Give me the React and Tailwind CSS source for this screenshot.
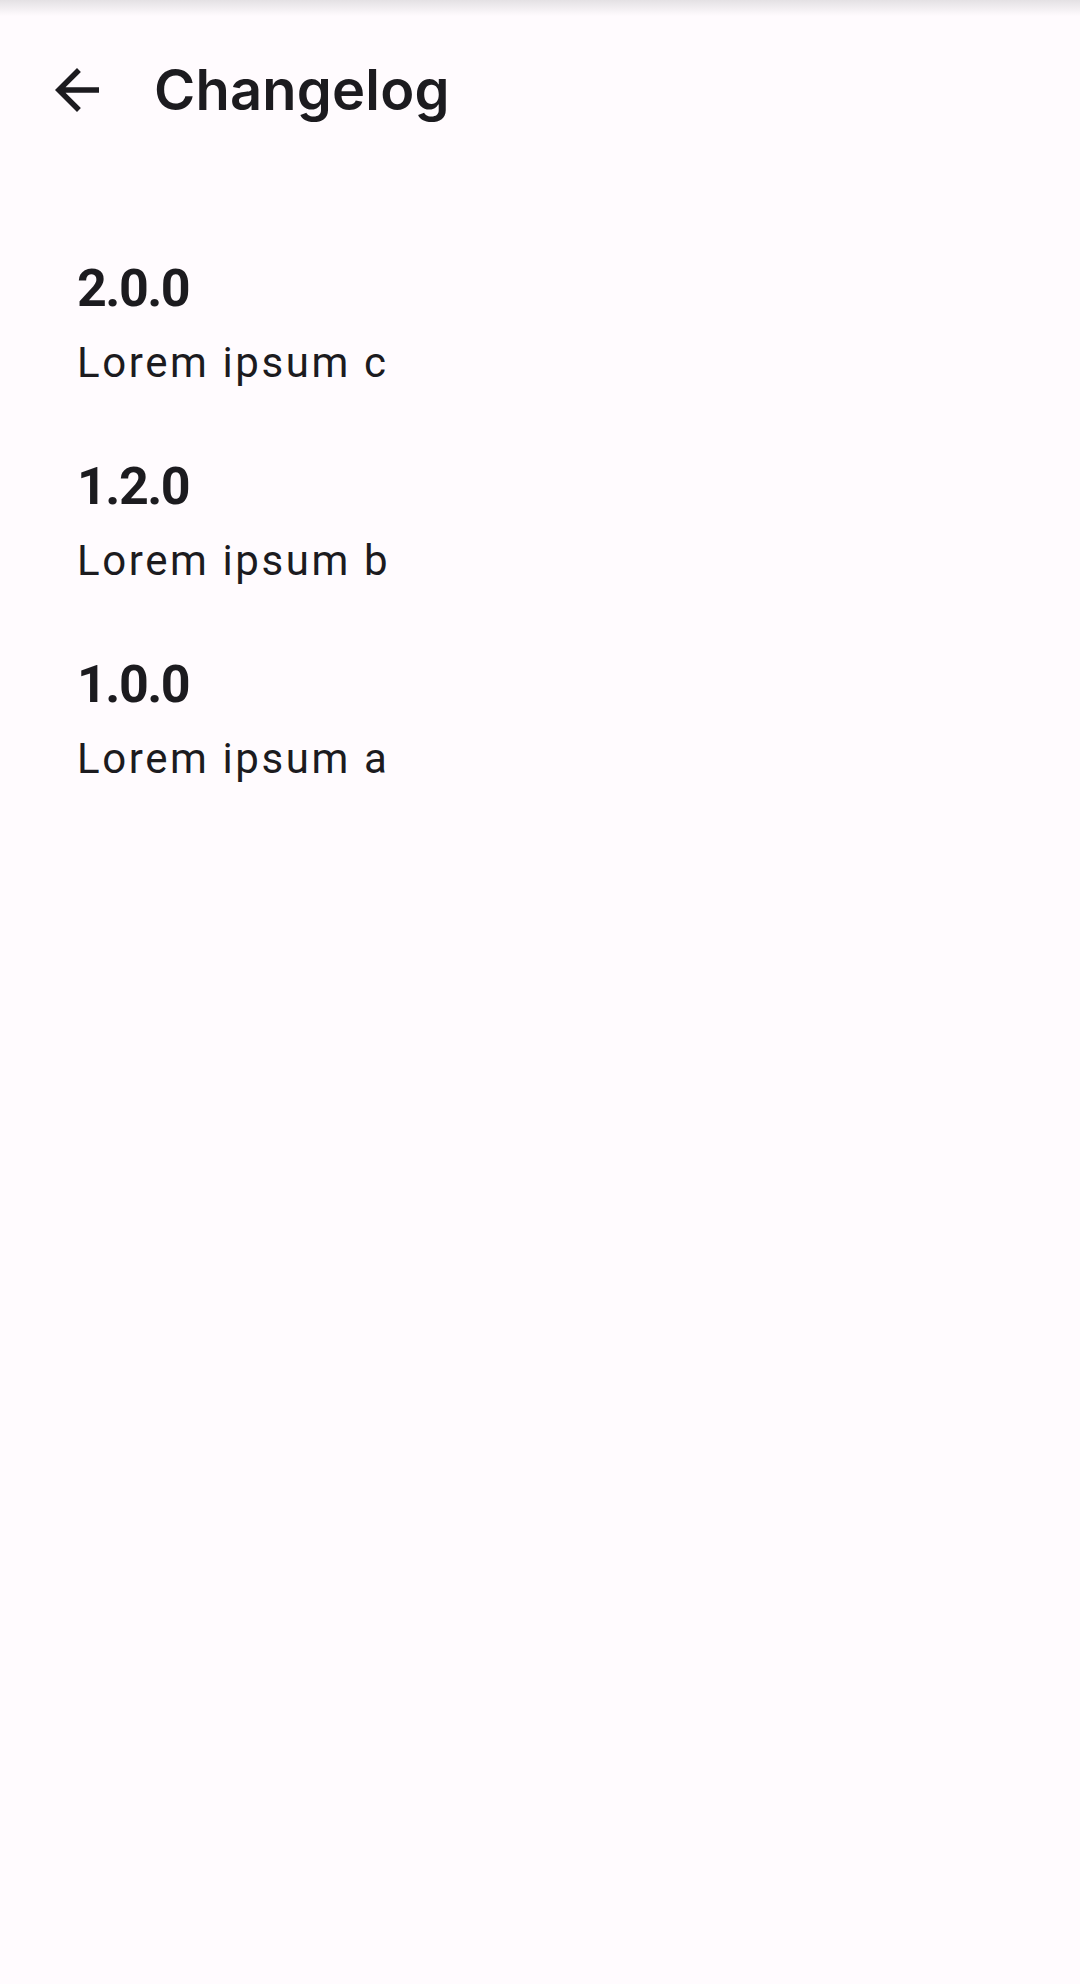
import React from "react";

const entries = [
  { version: "2.0.0", text: "Lorem ipsum c" },
  { version: "1.2.0", text: "Lorem ipsum b" },
  { version: "1.0.0", text: "Lorem ipsum a" },
];

export default function App() {
  return (
    <div className="relative min-h-[1984px] w-full bg-[#fffbfe] text-[#1c1b1f]">
      <div className="pointer-events-none absolute inset-x-0 top-0 h-[16px] bg-gradient-to-b from-[#e4e1e4] to-[#fffbfe00]" />
      <header className="flex h-[180px] items-center pl-[44px]">
        <button className="flex h-[66px] w-[66px] items-center justify-center">
          <svg viewBox="0 0 24 24" width="66" height="66" fill="#1c1b1f">
            <path d="M20 11H7.83l5.59-5.59L12 4l-8 8 8 8 1.41-1.41L7.83 13H20v-2z" />
          </svg>
        </button>
        <h1
          className="ml-[44px] text-[56px] font-semibold leading-[64px] tracking-[0.2px]"
          style={{ fontFamily: "Inter, 'Noto Sans', sans-serif" }}
        >
          Changelog
        </h1>
      </header>
      <main
        className="flex flex-col gap-[64px] pl-[77px] pt-[77px]"
        style={{ fontFamily: "Roboto, 'Liberation Sans', sans-serif" }}
      >
        {entries.map((e) => (
          <div key={e.version} className="flex flex-col">
            <div className="text-[52px] font-bold leading-[64px] tracking-[-1.5px]">{e.version}</div>
            <div className="mt-[14px] text-[42px] leading-[56px] tracking-[2.6px]">{e.text}</div>
          </div>
        ))}
      </main>
    </div>
  );
}
